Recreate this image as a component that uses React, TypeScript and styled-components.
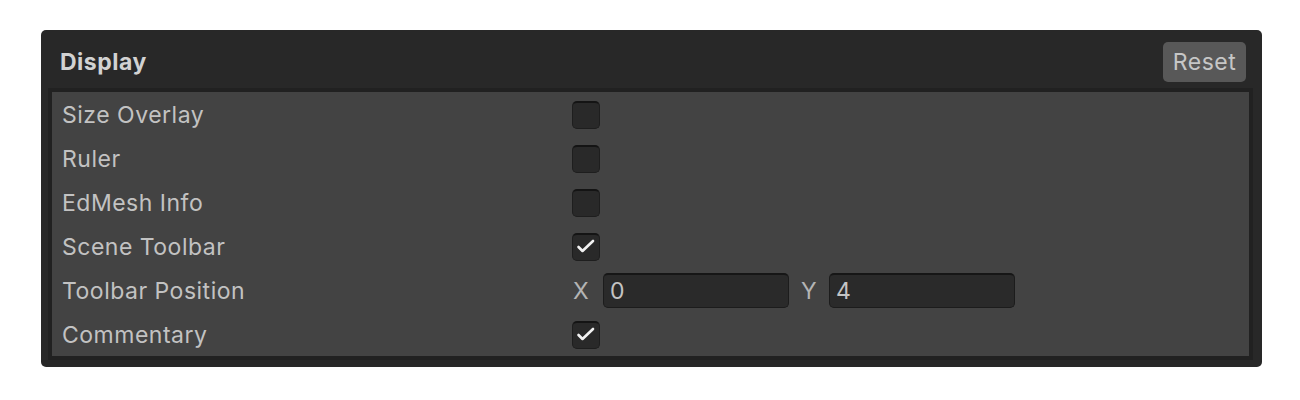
import React from "react";
import styled, { createGlobalStyle } from "styled-components";

const GlobalStyle = createGlobalStyle`
    body {
        margin: 0;
        background: #ffffff;
        font-family: Inter, "Noto Sans", sans-serif;
    }
`;

const Page = styled.div`
    padding: 30px 0 0 41px;
`;

const Panel = styled.section`
    width: 1221px;
    height: 337px;
    box-sizing: border-box;
    background: #282828;
    border-radius: 5px;
    display: flex;
    flex-direction: column;
`;

const Header = styled.header`
    display: flex;
    align-items: center;
    justify-content: space-between;
    padding: 12px 16px 6px 19px;
`;

const Title = styled.h2`
    margin: 0;
    font-size: 23px;
    font-weight: 700;
    letter-spacing: 0.5px;
    color: #d2d2d2;
`;

const ResetButton = styled.button`
    height: 40px;
    width: 83px;
    border: none;
    border-radius: 5px;
    background: #585858;
    color: #c6c6c6;
    font-family: Inter, sans-serif;
    font-size: 23px;
    letter-spacing: 0.5px;
    padding: 0;
`;

const Body = styled.div`
    margin: 0 9px 7px 7px;
    border: 4px solid #212121;
    background: #434343;
    flex: 1;
`;

const Row = styled.div`
    display: grid;
    grid-template-columns: 520px 1fr;
    align-items: center;
    height: 44px;
    padding-top: 1px;
    box-sizing: border-box;
`;

const Label = styled.span`
    padding-left: 10px;
    font-size: 23px;
    letter-spacing: 0.5px;
    color: #c2c2c2;
`;

const Box = styled.span`
    width: 28px;
    height: 28px;
    box-sizing: border-box;
    border-radius: 5px;
    background: #292929;
    border: 1px solid #1e1e1e;
    border-top: 2px solid #141414;
    display: flex;
    align-items: center;
    justify-content: center;
`;

const Vector = styled.div`
    display: flex;
    align-items: center;
`;

const Axis = styled.span<{ $w: number }>`
    font-size: 23px;
    color: #b4b4b4;
    width: ${(p) => p.$w}px;
    padding-left: 1px;
    box-sizing: border-box;
`;

const Field = styled.div`
    width: 186px;
    height: 35px;
    box-sizing: border-box;
    border-radius: 5px;
    background: #2a2a2a;
    border: 1px solid #1c1c1c;
    border-top: 2px solid #161616;
    display: flex;
    align-items: center;
    padding-left: 6px;
    font-size: 23px;
    color: #c4c4c4;
    margin-right: 11px;
`;

const Check = () => (
    <svg width="26" height="26" viewBox="0 0 26 26">
        <path d="M5.5 13 L9.5 17 L20 7" fill="none" stroke="#f2f2f2" strokeWidth="2.6" strokeLinecap="round" strokeLinejoin="round" />
    </svg>
);

type Item = { label: string; checked?: boolean; vector?: boolean };

const items: Item[] = [
    { label: "Size Overlay" },
    { label: "Ruler" },
    { label: "EdMesh Info" },
    { label: "Scene Toolbar", checked: true },
    { label: "Toolbar Position", vector: true },
    { label: "Commentary", checked: true },
];

export default function App() {
    return (
        <Page>
            <GlobalStyle />
            <Panel>
                <Header>
                    <Title>Display</Title>
                    <ResetButton type="button">Reset</ResetButton>
                </Header>
                <Body>
                    {items.map((item) => (
                        <Row key={item.label}>
                            <Label>{item.label}</Label>
                            {item.vector ? (
                                <Vector>
                                    <Axis $w={31}>X</Axis>
                                    <Field>0</Field>
                                    <Axis $w={29}>Y</Axis>
                                    <Field>4</Field>
                                </Vector>
                            ) : (
                                <Box>{item.checked && <Check />}</Box>
                            )}
                        </Row>
                    ))}
                </Body>
            </Panel>
        </Page>
    );
}
